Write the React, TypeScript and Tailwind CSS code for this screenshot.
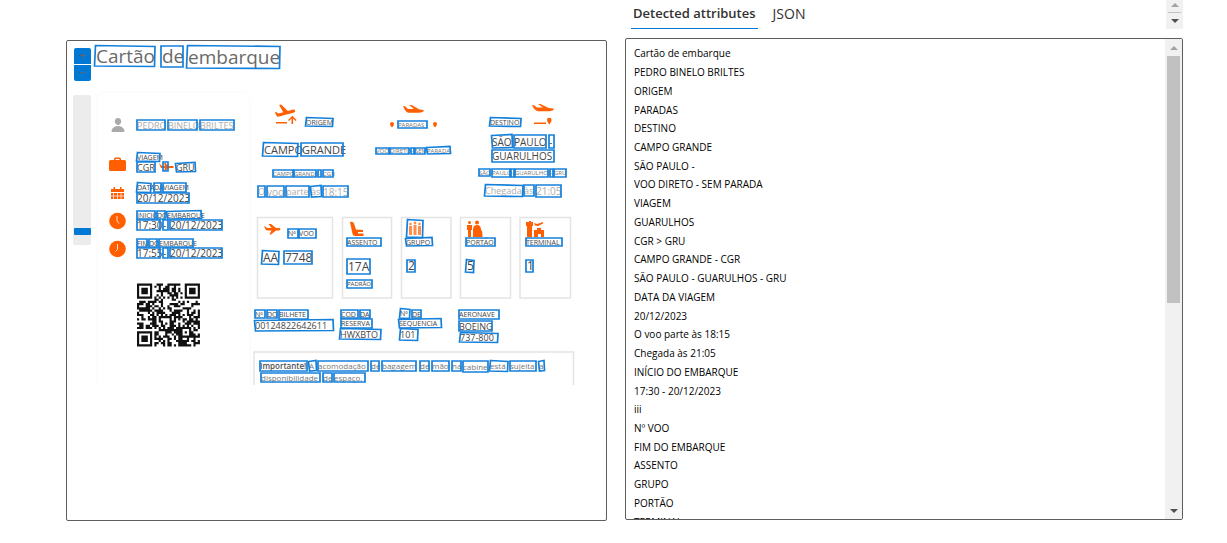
import React, { useState } from "react";
import { IoPerson } from "react-icons/io5";
import { MdFlightTakeoff } from "react-icons/md";

type Tone = "title" | "dark" | "mid" | "faint" | "orange" | "bold";
type Word = [text: string, x1: number, y1: number, x2: number, y2: number, size: number, tone: Tone, tilt?: number];

// Top-left corner of the viewer canvas in scan coordinates.
const ORIGIN = { x: 93, y: 41 };

const WORDS: Word[] = [
  ["Cartão", 95, 46, 155, 66, 19, "title", 1],
  ["de", 161, 46, 183, 67, 19, "title"],
  ["embarque", 187, 46, 280, 68, 19, "title", 1],
  ["PEDRO", 137, 120, 165, 130, 9, "faint"],
  ["BINELO", 168, 120, 197, 130, 9, "faint"],
  ["BRILTES", 200, 120, 234, 130, 9, "faint"],
  ["VIAGEM", 137, 153, 160, 161, 7, "dark", 1],
  ["CGR", 137, 162, 155, 172, 9, "dark"],
  ["", 163, 162, 168, 171, 9, "orange"],
  ["GRU", 176, 163, 195, 172, 9, "dark", -1],
  ["DATA", 137, 183, 151, 192, 7, "dark", 1],
  ["DA", 154, 183, 161, 192, 7, "dark"],
  ["VIAGEM", 163, 183, 186, 192, 7, "dark"],
  ["20/12/2023", 137, 193, 189, 203, 10, "dark"],
  ["INÍCIO", 137, 211, 155, 219, 7, "dark"],
  ["DO", 157, 211, 165, 219, 7, "dark"],
  ["EMBARQUE", 167, 211, 201, 219, 7, "dark", -1],
  ["17:30", 137, 220, 160, 230, 10, "dark"],
  ["-", 163, 220, 168, 230, 10, "dark"],
  ["20/12/2023", 170, 220, 222, 230, 10, "dark"],
  ["FIM", 137, 239, 147, 247, 7, "dark"],
  ["DO", 149, 239, 157, 247, 7, "dark"],
  ["EMBARQUE", 159, 239, 193, 247, 7, "dark"],
  ["17:55", 137, 248, 160, 258, 10, "dark"],
  ["-", 163, 248, 168, 258, 10, "dark"],
  ["20/12/2023", 170, 248, 222, 258, 10, "dark"],
  ["ORIGEM", 306, 118, 333, 126, 7, "dark", 1],
  ["CAMPO", 263, 143, 298, 156, 11, "dark", 1],
  ["GRANDE", 301, 143, 343, 156, 11, "dark"],
  ["CAMPO", 273, 170, 293, 177, 6, "mid"],
  ["GRANDE", 294, 170, 316, 177, 6, "mid"],
  ["-", 318, 170, 321, 177, 6, "mid"],
  ["CGR", 323, 170, 333, 177, 6, "mid"],
  ["O", 258, 186, 265, 197, 9, "faint"],
  ["voo", 267, 186, 284, 197, 10, "faint"],
  ["parte", 286, 186, 309, 197, 9, "faint"],
  ["às", 311, 186, 321, 197, 9, "faint", -1],
  ["18:15", 323, 186, 348, 197, 10, "faint"],
  ["PARADAS", 398, 121, 427, 128, 6, "mid"],
  ["VOO", 376, 148, 389, 154, 6, "mid"],
  ["DIRETO", 390, 148, 409, 154, 6, "mid"],
  ["-", 411, 148, 414, 154, 6, "mid"],
  ["SEM", 415, 148, 425, 154, 6, "mid"],
  ["PARADA", 427, 147, 450, 154, 6, "mid", -1],
  ["DESTINO", 490, 118, 521, 126, 7, "dark", 1],
  ["SÃO", 492, 135, 512, 148, 10, "dark", -1],
  ["PAULO", 514, 135, 546, 148, 10, "dark"],
  ["-", 549, 135, 554, 148, 10, "dark"],
  ["GUARULHOS", 492, 150, 554, 162, 10, "dark"],
  ["SÃO", 479, 169, 490, 176, 6, "mid"],
  ["PAULO", 492, 169, 510, 177, 6, "mid"],
  ["-", 511, 169, 514, 177, 6, "mid"],
  ["GUARULHOS", 515, 169, 548, 177, 6, "mid"],
  ["-", 550, 169, 553, 177, 6, "mid"],
  ["GRU", 554, 169, 566, 177, 6, "mid"],
  ["Chegada", 485, 185, 523, 196, 9, "faint", 1],
  ["às", 524, 185, 534, 196, 9, "faint"],
  ["21:05", 536, 185, 561, 197, 10, "faint"],
  ["Nº", 288, 229, 298, 238, 7, "dark"],
  ["VOO", 299, 229, 316, 238, 7, "dark"],
  ["AA", 262, 251, 279, 264, 12, "dark", 1],
  ["7748", 284, 251, 312, 264, 12, "dark"],
  ["ASSENTO", 347, 238, 381, 246, 7, "dark"],
  ["17A", 347, 259, 370, 274, 12, "dark"],
  ["PADRÃO", 347, 280, 372, 288, 6, "dark"],
  ["", 407, 220, 423, 237, 7, "dark", 1],
  ["GRUPO", 406, 238, 432, 246, 7, "dark", -1],
  ["2", 407, 260, 415, 272, 12, "dark"],
  ["PORTÃO", 466, 238, 495, 246, 7, "dark"],
  ["5", 466, 260, 474, 272, 12, "dark", 1],
  ["TERMINAL", 526, 238, 562, 246, 7, "dark"],
  ["1", 526, 260, 533, 272, 12, "dark"],
  ["Nº", 255, 310, 265, 318, 7, "dark"],
  ["DO", 267, 310, 277, 318, 7, "dark"],
  ["BILHETE", 279, 310, 308, 319, 7, "dark"],
  ["00124822642611", 255, 320, 333, 331, 9, "dark", -1],
  ["CÓD", 341, 310, 358, 318, 7, "dark"],
  ["DA", 360, 310, 370, 318, 7, "dark"],
  ["RESERVA", 341, 319, 372, 328, 7, "dark"],
  ["HWXBTO", 340, 329, 381, 339, 9, "dark", 1],
  ["Nº", 400, 309, 410, 318, 7, "dark", 1],
  ["DE", 412, 310, 421, 318, 7, "dark"],
  ["SEQUÊNCIA", 399, 319, 441, 328, 7, "dark", -1],
  ["101", 400, 329, 418, 340, 9, "dark", 1],
  ["AERONAVE", 459, 310, 499, 319, 7, "dark"],
  ["BOEING", 459, 321, 492, 331, 9, "dark"],
  ["737-800", 460, 333, 498, 342, 9, "dark", 1],
  ["Importante!", 260, 361, 307, 371, 8, "bold"],
  ["A", 309, 361, 316, 371, 8, "mid", -1],
  ["acomodação", 318, 361, 368, 371, 8, "mid"],
  ["de", 371, 361, 379, 371, 8, "mid"],
  ["bagagem", 382, 361, 416, 371, 8, "mid"],
  ["de", 420, 361, 429, 371, 8, "mid"],
  ["mão", 432, 361, 449, 371, 8, "mid"],
  ["na", 452, 361, 461, 371, 8, "mid"],
  ["cabine", 463, 361, 488, 372, 8, "mid"],
  ["está", 490, 361, 508, 371, 8, "mid", 1],
  ["sujeita", 510, 361, 536, 371, 8, "mid"],
  ["a", 539, 361, 544, 371, 8, "mid", -1],
  ["disponibilidade", 261, 373, 320, 382, 8, "mid"],
  ["de", 323, 373, 332, 382, 8, "mid"],
  ["espaço.", 334, 373, 365, 382, 8, "mid"],
];

const TONES: Record<Tone, string> = {
  title: "text-[#6a6a6a]",
  dark: "font-medium text-[#454545]",
  mid: "text-[#777777]",
  faint: "text-[#adadad]",
  orange: "text-[#ff5f00]",
  bold: "font-semibold text-[#505050]",
};

const ATTRIBUTES = [
  "Cartão de embarque", "PEDRO BINELO BRILTES", "ORIGEM", "PARADAS", "DESTINO",
  "CAMPO GRANDE", "SÃO PAULO -", "VOO DIRETO - SEM PARADA", "VIAGEM", "GUARULHOS",
  "CGR > GRU", "CAMPO GRANDE - CGR", "SÃO PAULO - GUARULHOS - GRU", "DATA DA VIAGEM",
  "20/12/2023", "O voo parte às 18:15", "Chegada às 21:05", "INÍCIO DO EMBARQUE",
  "17:30 - 20/12/2023", "iii", "Nº VOO", "FIM DO EMBARQUE", "ASSENTO", "GRUPO",
  "PORTÃO", "TERMINAL",
];

const QR_SIZE = 29;

function qrModule(row: number, col: number): boolean {
  const corners = [[0, 0], [0, QR_SIZE - 7], [QR_SIZE - 7, 0]];
  for (const [r0, c0] of corners) {
    const r = row - r0;
    const c = col - c0;
    if (r >= -1 && r <= 7 && c >= -1 && c <= 7) {
      const ring = Math.max(Math.abs(r - 3), Math.abs(c - 3));
      return ring === 3 || ring <= 1;
    }
  }
  const align = Math.max(Math.abs(row - 22), Math.abs(col - 22));
  if (align <= 2) return align !== 1;
  if (row === 6 || col === 6) return (row + col) % 2 === 0;
  const n = Math.sin(row * 12.9898 + col * 78.233) * 43758.5453;
  return n - Math.floor(n) > 0.48;
}

function qrPath(): string {
  let d = "";
  for (let r = 0; r < QR_SIZE; r++) {
    for (let c = 0; c < QR_SIZE; c++) if (qrModule(r, c)) d += `M${c} ${r}h1v1h-1z`;
  }
  return d;
}

function Artwork() {
  return (
    <svg className="absolute left-0 top-0" width="500" height="344" viewBox="93 41 500 344" fill="none" aria-hidden="true">
      <path d="M97 385V101q0-9 9-9H241q9 0 9 9V385" stroke="#fafafa" />
      <g stroke="#e4e4e4" strokeWidth="1.5">
        <rect x="257.5" y="217.500" width="75" height="80.500" />
        <rect x="342.500" y="217.500" width="49" height="80.500" />
        <rect x="401.500" y="217.500" width="49.500" height="80.500" />
        <rect x="460.500" y="217.500" width="50" height="80.500" />
        <rect x="520" y="217.500" width="50.500" height="80.500" />
        <path d="M254 386V352H573.500V386" />
      </g>
      <g fill="#ff5f00">
        <path d="M114 160v-1q0-1.500 1.500-1.500h4q1.500 0 1.500 1.500v1h3.500q1.500 0 1.500 1.500v8q0 1.500-1.500 1.500h-14q-1.500 0-1.500-1.500v-8q0-1.500 1.500-1.500zm1.500 0h4v-1h-4z" />
        <path d="M111 189h2.500v-2h1.500v2h5v-2h1.500v2h2.500v3h-13zM111 193h13v6h-13z" />
        <path d="M113.500 193v6M117.500 193v6M121 193v6M111 196h13" stroke="#fff" strokeWidth=".7" />
        <circle cx="117.500" cy="221" r="8.300" />
        <circle cx="117.500" cy="249" r="8.300" />
        <path d="M117 216v5l2 2.500M117.500 244v5.500l-2 2" stroke="#ffd9c2" strokeWidth="1" />
        <path d="M159 163l3 3h3l-1-3h1.500l2.500 3h5.500v2H168l-2.500 3H164l1-3h-4z" />
        <path d="M276 122h11v1.500h-11zM291.500 124v-5.500l-2.500 2.500-1-1 4.300-4.300 4.300 4.300-1 1-2.500-2.500v5.500z" />
        <path d="M403 106l2 .3 3 2.700h6l-5-4h2.500l8 4.500 4 .5q1 1.200-1 2l-3 .8h-11q-3-.5-5.500-6.800z" />
        <path d="M532 105l2 .2 3 2.300h6l-5-3.500h2.500l8 4 5 .5q1 1.200-1 2l-3 .8h-11q-4-.5-6.500-6.300z" />
        <path d="M390 124a2 2 0 114 0q0 1.500-2 3.500-2-2-2-3.500zM433 124a2 2 0 114 0q0 1.500-2 3.500-2-2-2-3.500zM547 120a2.300 2.300 0 114.600 0q0 1.800-2.300 4.500-2.300-2.700-2.300-4.500zM534 122.500h12v1.500h-12z" />
        <path d="M264 226l3.500 2h4l-3-4h2.500l5 4h3q1.500.5 1.500 1.300t-1.500 1.200h-3l-5 4h-1.500l2-4h-4q-2 0-3.500-4.500z" />
        <path d="M350 222q3-1 4 1.500l2 6 7 .5v2h-5v1.500h5.500v2.500H355q-2 0-2.500-2z" />
        <g opacity=".7">
          <circle cx="410.500" cy="224" r="1.300" /><circle cx="415" cy="223" r="1.400" /><circle cx="419.500" cy="224" r="1.300" />
          <path d="M409 226h3v9h-3zM413.500 225h3v10h-3zM418 226h3v9h-3z" />
        </g>
        <circle cx="469.500" cy="222.500" r="1.500" /><circle cx="477" cy="222.500" r="2" />
        <path d="M467 225h5v5h-1v7h-3v-7h-1zM473 237v-7q0-5 4-5t4 5q1.500 0 1.500 7z" />
        <path d="M527 222h2v-1h2v1h2v4h-1v11h-5v-11h-1v-4zM534 230h3v-2h4v2h3v7h-3v-3h-3v3h-4zM534 223l3 1 6-2v1.500l-5 2.500-3-.5z" />
      </g>
      <g transform="translate(137 283.500) scale(2.170)" fill="#111">
        <path d={qrPath()} />
      </g>
    </svg>
  );
}

function BoardingPass() {
  return (
    <div className="relative h-[344px] min-w-0 flex-1 overflow-hidden font-['Open_Sans','Noto_Sans',sans-serif]">
      <Artwork />
      <IoPerson className="absolute left-[17px] top-[76px] size-4 text-[#aaaaaa]" />
      <MdFlightTakeoff className="absolute left-[180px] top-[60px] size-6 text-[#ff5f00] [clip-path:inset(0_0_25%_0)]" />
      {WORDS.map(([text, x1, y1, , y2, size, tone], i) => (
        <span
          key={i}
          className={`absolute flex items-center whitespace-nowrap leading-none ${TONES[tone]}`}
          style={{ left: x1 - ORIGIN.x + (size > 10 ? 1 : 0), top: y1 - ORIGIN.y, height: y2 - y1, fontSize: size }}
        >
          {text}
        </span>
      ))}
      <svg className="absolute left-0 top-0" width="500" height="344" viewBox="93 41 500 344" fill="none" stroke="#1480da" strokeWidth="1.7" aria-hidden="true">
        {WORDS.map(([, x1, y1, x2, y2, , , tilt = 0], i) => (
          <polygon key={i} points={`${x1 + tilt / 2},${y1 - tilt / 2} ${x2},${y1 + tilt / 2} ${x2 - tilt / 2},${y2 + tilt / 2} ${x1 - tilt / 2},${y2}`} />
        ))}
      </svg>
    </div>
  );
}

function Arrow({ down = false, className }: { down?: boolean; className: string }) {
  return (
    <svg width="8" height="4" viewBox="0 0 8 4" className={className} fill="currentColor" aria-hidden="true">
      <path d={down ? "M0 0h8L4 4z" : "M0 4h8L4 0z"} />
    </svg>
  );
}

export default function App() {
  const [tab, setTab] = useState("attributes");
  const [zoom, setZoom] = useState(7);
  return (
    <main className="grid grid-cols-[541fr_558fr] gap-[18px] bg-white pl-[66px] pr-11 font-['Open_Sans','Noto_Sans',sans-serif]">
      <section aria-label="Document" className="mt-10 flex h-[481px] min-w-0 rounded-xs border border-[#605e5c] pl-1.5">
        <div className="flex w-5 shrink-0 flex-col pt-[7px]">
          <button type="button" aria-label="Zoom in" onClick={() => setZoom(Math.min(100, zoom + 5))} className="ml-px flex h-4 w-[17px] items-center justify-center rounded-t-xs bg-[#0078d4] text-[12px] leading-none text-[#6b6360]">+</button>
          <button type="button" aria-label="Zoom out" onClick={() => setZoom(Math.max(0, zoom - 5))} className="ml-px mt-px flex h-4 w-[17px] items-center justify-center rounded-b-xs bg-[#0078d4] text-[12px] leading-none text-[#6b6360]">−</button>
          <input
            type="range"
            aria-label="Zoom level"
            value={zoom}
            onChange={(e) => setZoom(Number(e.target.value))}
            className="mt-3.5 h-[150px] w-[18px] appearance-none rounded-xs bg-[#ececec] [direction:rtl] [writing-mode:vertical-lr] [&::-webkit-slider-thumb]:h-[7px] [&::-webkit-slider-thumb]:w-[17px] [&::-webkit-slider-thumb]:appearance-none [&::-webkit-slider-thumb]:rounded-[1px] [&::-webkit-slider-thumb]:bg-[#0078d4]"
          />
        </div>
        <BoardingPass />
      </section>

      <section aria-label="Results" className="flex min-w-0 flex-col">
        <div className="flex h-[29px] items-stretch justify-between">
          <div role="tablist" className="ml-1.5 flex gap-[13px] text-[#323130]">
            <button type="button" role="tab" aria-selected={tab === "attributes"} onClick={() => setTab("attributes")} className="border-b border-[#0078d4] px-0.5 text-[13px] font-semibold">Detected attributes</button>
            <button type="button" role="tab" aria-selected={tab === "json"} onClick={() => setTab("json")} className="px-0.5 pb-[3px] text-[14px]">JSON</button>
          </div>
          <div className="flex w-[17px] flex-col items-center bg-[#f1f1f1]">
            <button type="button" aria-label="Scroll up" className="flex h-3 w-full items-start justify-center pt-[3px]"><Arrow className="text-[#a3a3a3]" /></button>
            <span className="h-px w-[13px] bg-[#c1c1c1]" />
            <button type="button" aria-label="Scroll down" className="flex h-4 w-full items-center justify-center"><Arrow down className="text-[#505050]" /></button>
          </div>
        </div>
        <div className="mt-[9px] flex h-[482px] overflow-hidden rounded-xs border border-[#605e5c]">
          <ul className="grid h-[492px] flex-1 auto-rows-fr items-center pl-2 pt-[5px] text-[10px] leading-4 text-black">
            {ATTRIBUTES.map((item) => (
              <li key={item}>{item}</li>
            ))}
          </ul>
          <div className="flex w-[17px] flex-col items-center bg-[#f1f1f1]">
            <button type="button" aria-label="Scroll list up" className="flex h-[17px] w-full items-center justify-center"><Arrow className="text-[#a3a3a3]" /></button>
            <div className="w-full flex-1 px-0.5"><div className="h-[247px] bg-[#c1c1c1]" /></div>
            <button type="button" aria-label="Scroll list down" className="flex h-[17px] w-full items-center justify-center"><Arrow down className="text-[#505050]" /></button>
          </div>
        </div>
      </section>
    </main>
  );
}
